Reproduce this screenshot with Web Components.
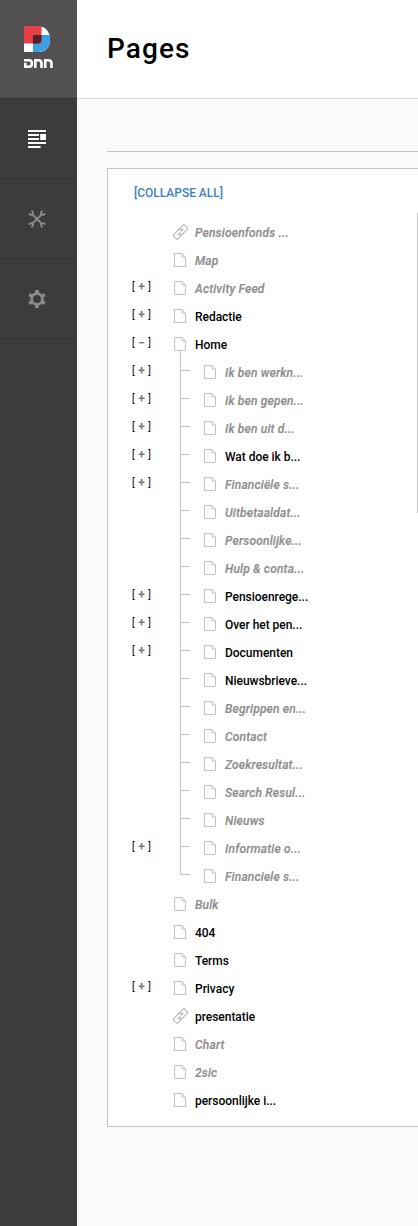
<!DOCTYPE html>
<html lang="nl"><head><meta charset="utf-8"><title>Pages</title>
<style>
html,body{margin:0;height:100%;overflow:hidden}
body{font-family:Roboto,sans-serif;background:#fafafa;color:#000}
</style></head><body>
<dnn-app></dnn-app>
<script>
class Base extends HTMLElement{
  render(html){this.attachShadow({mode:'open'}).innerHTML=html}
}
const pageIcon='<svg width="14" height="16" viewBox="0 0 14 16" fill="none" stroke="#c2c2c2"><path d="M1.500 1.500H9L12.500 5V14.500H1.500Z"/><path d="M9 1.500V5H12.500"/></svg>';
const linkIcon='<svg width="16" height="16" viewBox="0 0 16 16" fill="none" stroke="#bbb" stroke-width="1.100"><g transform="translate(7.500 8) rotate(-45)"><path d="M1.500 -.8V-2.900H-7.800V2.900H-2.300V.8M-1.500 .8V2.900H7.800V-2.900H2.300V-.8"/><path d="M-4.200 0H-1.500V1.200M4.200 0H1.500V-1.200"/></g></svg>';

customElements.define('dnn-logo',class extends Base{connectedCallback(){this.render(`
<style>:host{display:flex;height:98px;box-sizing:border-box;padding:26px 0 0 24px;background:#525050}svg{display:block}</style>
<svg width="30" height="43" viewBox="0 0 30 43"><path d="M0 0H15Q26 2 26 13Q26 26 14 26H0Z" fill="#fff"/><path d="M9 9H26V13Q26 26 13 26H9Z" fill="#3b9fe2"/><path d="M0 0H17.500V17.500H0Z" fill="#e53e47"/><path d="M9 9H17.500V13Q17.500 17.500 13 17.500H9Z" fill="#541f27"/>
<g fill="none" stroke="#fff" stroke-width="2.600"><path d="M0 34.300H5.300Q7.900 34.300 7.900 37.500T5.300 40.700H1.300V36.700"/><path d="M11.300 42V34.300H14.500Q17.500 34.300 17.500 37.500V42M21.200 42V34.300H24.400Q27.500 34.300 27.500 37.500V42"/></g></svg>`)}});

const navIcons={
content:'<g fill="#fff"><path d="M0 0H18V2H0ZM0 4H11V6H0ZM12.200 4H18V10H12.200ZM0 8H11V10H0ZM0 12H18V14H0ZM0 16H12.500V18H0Z"/></g>',
tools:'<g fill="none" stroke="#8b8989" stroke-width="1.900"><path d="M4.500 4.500L13.500 13.500M13.500 4.500L4.500 13.500"/><path d="M3.400 .9Q5.800 2.200 4.600 4.100Q2.800 5.800 .9 3.400M14.600 .9Q12.200 2.200 13.400 4.100Q15.200 5.800 17.100 3.400M3.400 17.100Q5.800 15.800 4.600 13.900Q2.800 12.200 .9 14.600M14.600 17.100Q12.200 15.800 13.400 13.900Q15.200 12.200 17.100 14.600"/></g>',
gear:'<g fill="none" stroke="#8b8989"><circle cx="9" cy="9" r="5.400" stroke-width="2.900"/><path stroke-width="3.600" d="M9 0V3M9 15V18M1.200 4.500L3.800 6M14.200 12L16.800 13.500M1.200 13.500L3.800 12M14.200 6L16.800 4.500"/></g>'};
customElements.define('nav-item',class extends Base{connectedCallback(){this.render(`
<style>:host{display:flex;height:80px;box-sizing:border-box;border-bottom:1px solid #343232;align-items:center;padding:0 0 0 28px}svg{display:block}</style>
<svg width="18" height="18" viewBox="0 0 18 18">${navIcons[this.getAttribute('icon')]}</svg>`)}});

customElements.define('side-bar',class extends Base{connectedCallback(){this.render(`
<style>:host{display:flex;flex-direction:column;width:77px;flex:none;background:#3e3b3c}nav{display:flex;flex-direction:column;border-top:1px solid #383536}</style>
<dnn-logo></dnn-logo><nav><nav-item icon="content"></nav-item><nav-item icon="tools"></nav-item><nav-item icon="gear"></nav-item></nav>`)}});

customElements.define('tree-toggle',class extends Base{connectedCallback(){this.render(`
<style>:host{display:flex;width:19px;height:12px;justify-content:space-between;align-items:center;font:400 10px/12px Roboto,sans-serif;color:#000}
i{font:700 12px/12px Roboto,sans-serif;color:#7c7c7c}</style>
<span>[</span><i><slot></slot></i><span>]</span>`)}});

customElements.define('tree-row',class extends Base{connectedCallback(){
const t=this.getAttribute('toggle');
this.render(`
<style>:host{display:grid;grid-template-columns:41px auto 1fr;height:28px;align-items:center;color:#000;font:500 12px/28px Roboto,sans-serif;letter-spacing:-.03px}
:host([muted]){color:#8e8e8e;font-style:italic;letter-spacing:.18px;-webkit-text-stroke:.2px #8e8e8e}
.t{padding-bottom:4px;letter-spacing:0;-webkit-text-stroke:0}.i{display:flex;width:22px}
.i svg{margin-top:-2px}
:host([child]) .i{padding-left:30px}
:host([child]){background:linear-gradient(#c4c4c4,#c4c4c4) 49px 11px/9px 1px no-repeat,linear-gradient(#c4c4c4,#c4c4c4) 48px 0/1px 100% no-repeat}
:host([last]){background-size:9px 1px,1px 12px}
:host([open]){background:linear-gradient(#c4c4c4,#c4c4c4) 48px 20px/1px 8px no-repeat}
</style><div class="t">${t?`<tree-toggle>${t}</tree-toggle>`:''}</div><div class="i">${this.hasAttribute('link')?linkIcon:pageIcon}</div><span><slot></slot></span>`)}});

const rows=[['Pensioenfonds ...','ml'],['Map','m'],['Activity Feed','m+'],['Redactie','+'],['Home','-'],
['Ik ben werkn...','cm+'],['Ik ben gepen...','cm+'],['Ik ben uit d...','cm+'],['Wat doe ik b...','c+'],['Financiële s...','cm+'],['Uitbetaaldat...','cm'],['Persoonlijke...','cm'],['Hulp &amp; conta...','cm'],['Pensioenrege...','c+'],['Over het pen...','c+'],['Documenten','c+'],['Nieuwsbrieve...','c'],['Begrippen en...','cm'],['Contact','cm'],['Zoekresultat...','cm'],['Search Resul...','cm'],['Nieuws','cm'],['Informatie o...','cm+'],['Financiele s...','cme'],
['Bulk','m'],['404',''],['Terms',''],['Privacy','+'],['presentatie','l'],['Chart','m'],['2sic','m'],['persoonlijke i...','']];
customElements.define('page-tree',class extends Base{connectedCallback(){this.render(`
<style>:host{display:flex;flex-direction:column}</style>`+rows.map(([n,f])=>{
const h=c=>f.includes(c);
return `<tree-row${h('m')?' muted':''}${h('l')?' link':''}${h('c')?' child':''}${h('e')?' last':''}${h('+')?' toggle="+"':''}${h('-')?' toggle="−" open':''}>${n}</tree-row>`}).join(''))}});

customElements.define('page-panel',class extends Base{connectedCallback(){this.render(`
<style>:host{display:flex;justify-content:space-between;height:959px;box-sizing:border-box;border:1px solid #c4c4c4;border-right:0;background:#fff}
.l{padding:16px 0 0 24px;width:270px}
a{display:block;font:500 12px/16px Roboto,sans-serif;color:#3d7fc0;padding-left:2px;margin-bottom:18px;letter-spacing:-.02px}
.r{width:1px;height:300px;margin-top:44px;background:#c4c4c4}</style>
<div class="l"><a>[COLLAPSE ALL]</a><page-tree></page-tree></div><div class="r"></div>`)}});

customElements.define('dnn-app',class extends Base{connectedCallback(){this.render(`
<style>:host{display:flex;height:1226px}main{flex:1;min-width:0}
header{height:99px;box-sizing:border-box;background:#fff;border-bottom:1px solid #dcdcdc;padding-left:30px}
h1{margin:0;font:500 28px/97px Roboto,sans-serif;letter-spacing:1.1px}
section{padding:52px 0 0 30px}hr{margin:0 0 16px;border:0;height:1px;background:#c4c4c4}</style>
<side-bar></side-bar><main><header><h1>Pages</h1></header><section><hr><page-panel></page-panel></section></main>`)}});
</script></body></html>
